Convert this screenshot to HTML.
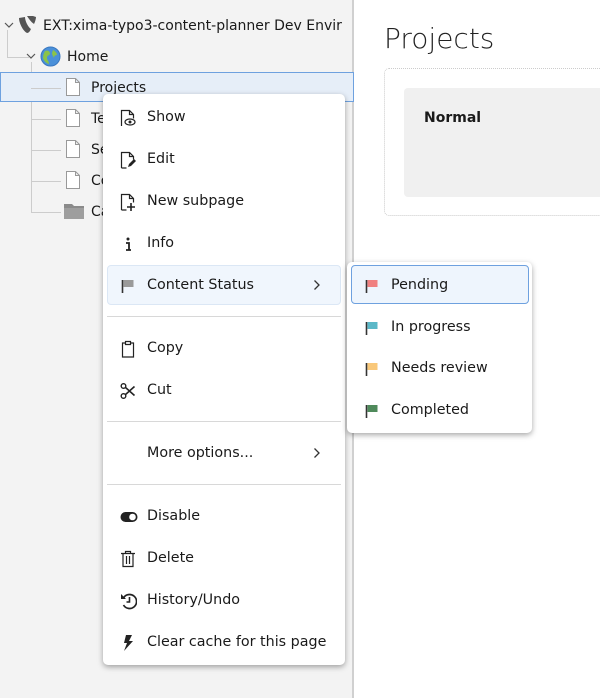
<!DOCTYPE html>
<html><head><style>
*{margin:0;padding:0;box-sizing:border-box}
body{width:600px;height:698px;overflow:hidden;position:relative;background:#fff;font-family:"DejaVu Sans","Liberation Sans",sans-serif;font-size:13.5px;color:#1a1a1a}
.tree{position:absolute;left:0;top:0;width:354px;height:698px;background:#f3f3f3;border-right:2px solid #d0d0d0}
.ab{position:absolute}
.t{position:absolute;white-space:nowrap;font-size:14px}
.menu{position:absolute;background:#fff;border-radius:5px;box-shadow:0 2px 6px rgba(0,0,0,.35)}
.it{position:absolute;left:0;right:0;height:40px;display:flex;align-items:center;white-space:nowrap;font-size:14.3px}
.it svg{position:absolute;left:17px;top:12px}
.it span{position:absolute;left:44px;top:12px}
.sep{position:absolute;left:4px;right:4px;height:1px;background:#d8d8d8}
.it svg.chev{left:210px;top:14px}
</style></head><body>
<div class="tree">
  <div class="ab" style="left:7px;top:30px;width:1px;height:27px;background:#ccc"></div>
  <div class="ab" style="left:7px;top:57px;width:22px;height:1px;background:#ccc"></div>
  <div class="ab" style="left:31px;top:62px;width:1px;height:150px;background:#ccc"></div>
  <div class="ab" style="left:31px;top:119px;width:30px;height:1px;background:#ccc"></div>
  <div class="ab" style="left:31px;top:150px;width:30px;height:1px;background:#ccc"></div>
  <div class="ab" style="left:31px;top:181px;width:30px;height:1px;background:#ccc"></div>
  <div class="ab" style="left:31px;top:212px;width:30px;height:1px;background:#ccc"></div>
  <div class="ab" style="left:0;top:72px;width:354px;height:30px;background:#e6eef8;border:1px solid #6ea1df"></div>
  <div class="ab" style="left:31px;top:88px;width:30px;height:1px;background:#ccc"></div>
  <svg class="ab" style="left:4px;top:22px" width="10" height="8"><path d="M1 1l4 4 4-4" fill="none" stroke="#555" stroke-width="1.2"/></svg>
  <svg class="ab" style="left:17px;top:15px" width="20" height="20"><path d="M2 3c0 5 4 13 8 15 2 0 3-2 4-4-3-2-6-8-6-12zM10 1l6 0 3 1c0 2-1 5-2 7-3-2-5-5-7-8z" fill="#555"/></svg>
  <div class="t" style="left:43px;top:18px">EXT:xima-typo3-content-planner Dev Envir</div>
  <svg class="ab" style="left:26px;top:53px" width="10" height="8"><path d="M1 1l4 4 4-4" fill="none" stroke="#555" stroke-width="1.2"/></svg>
  <svg class="ab" style="left:40px;top:46px" width="21" height="21"><circle cx="10.5" cy="10.5" r="9.5" fill="#4a90d9" stroke="#3a78c0"/><path d="M5 5c3-1 5 0 5 3-1 2-3 1-3 4 0 2 2 3 2 6-3-1-5-3-6-6 0-3 1-5 2-7zM13 4c2 1 4 3 4 5-2 0-3 1-3 3-1-2-2-3-2-5z" fill="#8bc34a"/></svg>
  <div class="t" style="left:67px;top:49px">Home</div>
  <svg class="ab" style="left:65px;top:77px" width="16" height="20"><path d="M1.5 1.5h9l4 4v13h-13z M10.5 1.5v4h4" fill="#fff" stroke="#999"/></svg>
  <div class="t" style="left:91px;top:80px">Projects</div>
  <svg class="ab" style="left:65px;top:108px" width="16" height="20"><path d="M1.5 1.5h9l4 4v13h-13z M10.5 1.5v4h4" fill="#fff" stroke="#999"/></svg>
  <div class="t" style="left:91px;top:111px">Te</div>
  <svg class="ab" style="left:65px;top:139px" width="16" height="20"><path d="M1.5 1.5h9l4 4v13h-13z M10.5 1.5v4h4" fill="#fff" stroke="#999"/></svg>
  <div class="t" style="left:91px;top:142px">Se</div>
  <svg class="ab" style="left:65px;top:170px" width="16" height="20"><path d="M1.5 1.5h9l4 4v13h-13z M10.5 1.5v4h4" fill="#fff" stroke="#999"/></svg>
  <div class="t" style="left:91px;top:173px">Co</div>
  <svg class="ab" style="left:64px;top:204px" width="20" height="15"><path d="M0 0h8l2 2h10v13h-20z" fill="#8a8a8a"/><path d="M0 4h20v11h-20z" fill="#9e9e9e"/></svg>
  <div class="t" style="left:91px;top:204px">Ca</div>
</div>
<div class="t" style="left:384px;top:22px;font-size:28px;font-weight:300;color:#222">Projects</div>
<div class="ab" style="left:384px;top:68px;width:230px;height:148px;border:1px dotted #ccc;border-radius:5px"></div>
<div class="ab" style="left:404px;top:88px;width:210px;height:109px;background:#f0f0f0;border-radius:4px"></div>
<div class="t" style="left:424px;top:110px;font-weight:bold;font-size:14px">Normal</div>

<div class="menu" style="left:103px;top:94px;width:242px;height:571px">
  <div class="it" style="top:3px"><svg width="16" height="18"><path d="M1.5 17v-15.5h8l4 4v4 M9.5 1.5v4h4" fill="none" stroke="#222" stroke-width="1.2"/><ellipse cx="10" cy="13" rx="5" ry="3" fill="#fff" stroke="#222" stroke-width="1.2"/><circle cx="10" cy="13" r="1.5" fill="#222"/></svg><span>Show</span></div>
  <div class="it" style="top:45px"><svg width="16" height="18"><path d="M1.5 17v-15.5h8l4 4v3 M9.5 1.5v4h4 M1.5 17h5" fill="none" stroke="#222" stroke-width="1.2"/><path d="M8 16l1-3 5-5 2 2-5 5z" fill="#222"/></svg><span>Edit</span></div>
  <div class="it" style="top:87px"><svg width="16" height="18"><path d="M1.5 17v-15.5h8l4 4v4 M9.5 1.5v4h4 M1.5 17h5" fill="none" stroke="#222" stroke-width="1.2"/><path d="M11 10v8M7 14h8" stroke="#222" stroke-width="1.6"/></svg><span>New subpage</span></div>
  <div class="it" style="top:129px"><svg width="16" height="18"><circle cx="8" cy="4" r="1.5" fill="#222"/><path d="M6 8h3v7h2M6 15h5" fill="none" stroke="#222" stroke-width="1.8"/></svg><span>Info</span></div>
  <div class="ab" style="left:4px;top:171px;width:234px;height:40px;background:#f0f6fd;border:1px solid #dbe7f5;border-radius:4px"></div>
  <div class="it" style="top:171px"><svg width="16" height="18"><path d="M2.5 3v13" stroke="#333" stroke-width="1.6"/><path d="M3.5 3h10v7h-10z" fill="#9a9a9a"/></svg><span>Content Status</span><svg class="chev" width="8" height="12"><path d="M1.5 1.5l4.5 4.5-4.5 4.5" fill="none" stroke="#333" stroke-width="1.3"/></svg></div>
  <div class="sep" style="top:222px"></div>
  <div class="it" style="top:234px"><svg width="16" height="18"><path d="M2.5 3h11v14h-11z" fill="none" stroke="#222" stroke-width="1.2"/><path d="M5.5 1.5h5v3h-5z" fill="#fff" stroke="#222" stroke-width="1.2"/></svg><span>Copy</span></div>
  <div class="it" style="top:276px"><svg width="16" height="18"><circle cx="3.5" cy="4" r="2.3" fill="none" stroke="#222" stroke-width="1.4"/><circle cx="3.5" cy="14" r="2.3" fill="none" stroke="#222" stroke-width="1.4"/><path d="M5.5 5.5l9 8M5.5 12.5l9-8" stroke="#222" stroke-width="1.6"/></svg><span>Cut</span></div>
  <div class="sep" style="top:327px"></div>
  <div class="it" style="top:339px"><span>More options...</span><svg class="chev" width="8" height="12"><path d="M1.5 1.5l4.5 4.5-4.5 4.5" fill="none" stroke="#333" stroke-width="1.3"/></svg></div>
  <div class="sep" style="top:390px"></div>
  <div class="it" style="top:402px"><svg width="18" height="12" style="top:15px"><rect x="0.5" y="1" width="17" height="10" rx="5" fill="#222"/><circle cx="12.5" cy="6" r="3.3" fill="#fff"/></svg><span>Disable</span></div>
  <div class="it" style="top:444px"><svg width="16" height="18"><path d="M1 3.5h14M5.5 3.5v-2h5v2M3 3.5v13h10v-13M6.5 6v8M9.5 6v8" fill="none" stroke="#222" stroke-width="1.2"/></svg><span>Delete</span></div>
  <div class="it" style="top:486px"><svg width="17" height="18"><path d="M3.5 6a7 7 0 1 1 0 7" fill="none" stroke="#222" stroke-width="1.7"/><path d="M1 2v5h5z" fill="#222"/><path d="M9.5 5v5h-3" fill="none" stroke="#222" stroke-width="1.6"/></svg><span>History/Undo</span></div>
  <div class="it" style="top:528px"><svg width="16" height="18"><path d="M6 1h6l-3 6h4l-9 10 3-8h-3z" fill="#222"/></svg><span>Clear cache for this page</span></div>
</div>

<div class="menu" style="left:347px;top:262px;width:185px;height:171px">
  <div class="ab" style="left:4px;top:3px;width:178px;height:39px;background:#eef5fd;border:1px solid #6ea1df;border-radius:4px"></div>
  <div class="it" style="top:3px"><svg width="16" height="18"><path d="M2.5 3v13" stroke="#333" stroke-width="1.6"/><path d="M3.5 3h10v7h-10z" fill="#f08080"/></svg><span>Pending</span></div>
  <div class="it" style="top:45px"><svg width="16" height="18"><path d="M2.5 3v13" stroke="#333" stroke-width="1.6"/><path d="M3.5 3h10v7h-10z" fill="#5bb8c8"/></svg><span>In progress</span></div>
  <div class="it" style="top:86px"><svg width="16" height="18"><path d="M2.5 3v13" stroke="#333" stroke-width="1.6"/><path d="M3.5 3h10v7h-10z" fill="#f9c87a"/></svg><span>Needs review</span></div>
  <div class="it" style="top:128px"><svg width="16" height="18"><path d="M2.5 3v13" stroke="#333" stroke-width="1.6"/><path d="M3.5 3h10v7h-10z" fill="#4f8a5b"/></svg><span>Completed</span></div>
</div>
</body></html>
